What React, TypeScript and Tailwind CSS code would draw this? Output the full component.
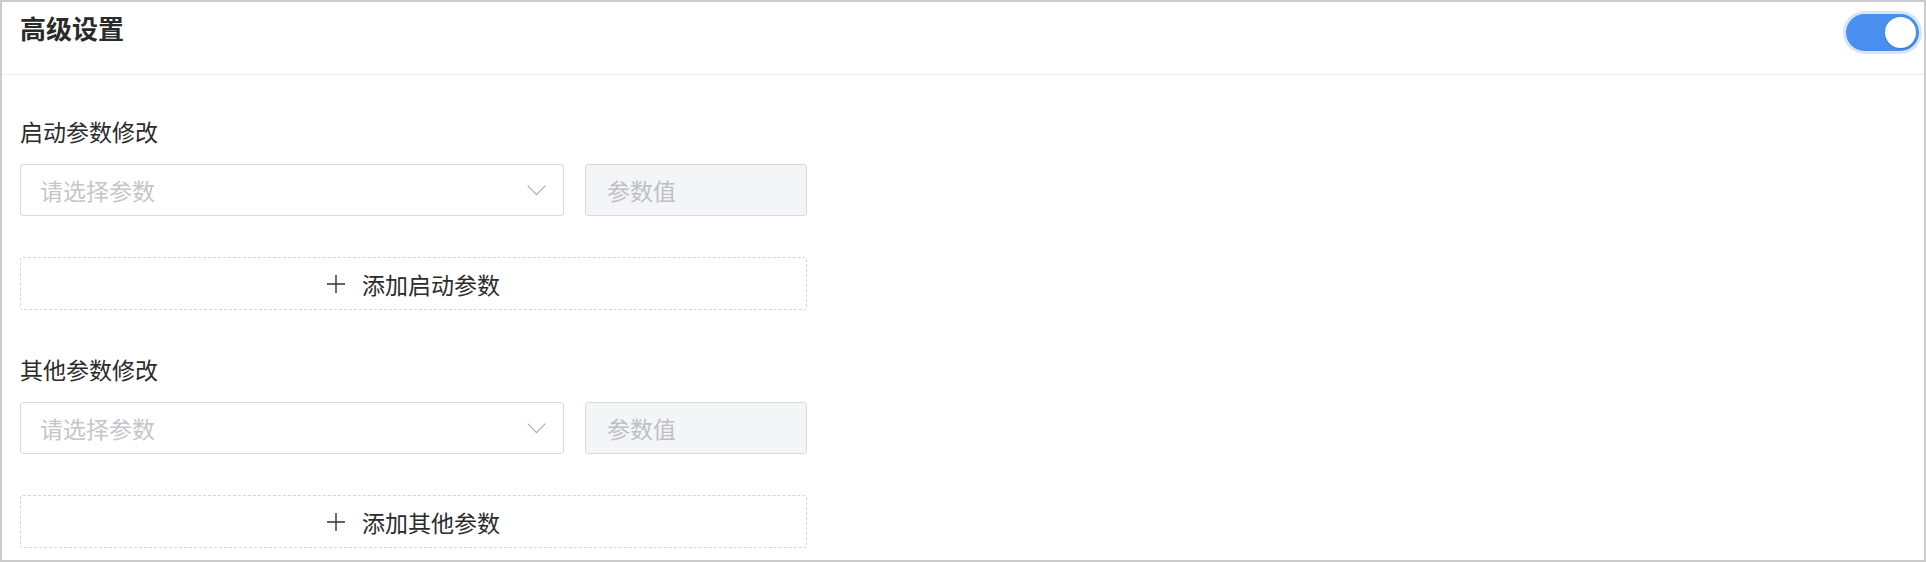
import { useState } from 'react';

type Section = {
  title: string;
  addLabel: string;
};

const sections: Section[] = [
  { title: '启动参数修改', addLabel: '添加启动参数' },
  { title: '其他参数修改', addLabel: '添加其他参数' },
];

function Toggle({ on, onChange }: { on: boolean; onChange: (v: boolean) => void }) {
  return (
    <button
      type="button"
      onClick={() => onChange(!on)}
      className={`mt-[6px] flex h-[37px] w-[73px] shrink-0 items-center rounded-full px-[3px] shadow-[0_0_0_3px_#d6e5fb] ${
        on ? 'justify-end bg-[#4a8ff0]' : 'justify-start bg-[#c9ced6]'
      }`}
    >
      <span className="h-[31px] w-[31px] rounded-full bg-white shadow-[0_1px_2px_rgba(0,0,0,0.2)]" />
    </button>
  );
}

function ParamRow() {
  return (
    <div className="mt-[17px] flex gap-[21px]">
      <div className="flex h-[52px] w-[544px] items-center justify-between rounded-[3px] border border-[#d7dade] bg-white pl-[19px] pr-[17px]">
        <span className="text-[23px] leading-[32px] text-[#c3c6cb]">请选择参数</span>
        <svg width="19" height="11" viewBox="0 0 19 11" fill="none">
          <path d="M0.7 0.7l8.8 9 8.8-9" stroke="#a9adb3" strokeWidth="1.2" />
        </svg>
      </div>
      <div className="flex h-[52px] w-[222px] items-center rounded-[3px] border border-[#d7dade] bg-[#f3f5f7] pl-[21px]">
        <span className="text-[23px] leading-[32px] text-[#bdc0c5]">参数值</span>
      </div>
    </div>
  );
}

function AddButton({ label }: { label: string }) {
  return (
    <button
      type="button"
      className="mt-[41px] flex h-[53px] w-[787px] items-center justify-center gap-[17px] rounded-[3px] border border-dashed border-[#d3d5d8] bg-white"
    >
      <svg width="18" height="18" viewBox="0 0 18 18" fill="none">
        <path d="M9 0v18M0 9h18" stroke="#333" strokeWidth="1.4" />
      </svg>
      <span className="text-[23px] leading-[32px] text-[#2b2b2b]">{label}</span>
    </button>
  );
}

export default function App() {
  const [enabled, setEnabled] = useState(true);

  return (
    <div
      className="box-border flex h-[562px] w-full flex-col border-2 border-[#cbcbcb] bg-white"
      style={{ fontFamily: '"Noto Sans CJK SC", "Noto Sans", sans-serif' }}
    >
      <div className="flex h-[73px] shrink-0 items-start justify-between border-b border-[#ececec] pl-[18px] pr-[5px] pt-[6px]">
        <h2 className="mt-[2px] text-[26px] font-semibold leading-[36px] text-[#2a2a2a]">高级设置</h2>
        <Toggle on={enabled} onChange={setEnabled} />
      </div>

      <div className="flex flex-col px-[18px] pt-[40px]">
        {sections.map((s, i) => (
          <div key={s.title} className={i > 0 ? 'mt-[43px]' : ''}>
            <div className="text-[23px] leading-[32px] text-[#2b2b2b]">{s.title}</div>
            <ParamRow />
            <AddButton label={s.addLabel} />
          </div>
        ))}
      </div>
    </div>
  );
}
